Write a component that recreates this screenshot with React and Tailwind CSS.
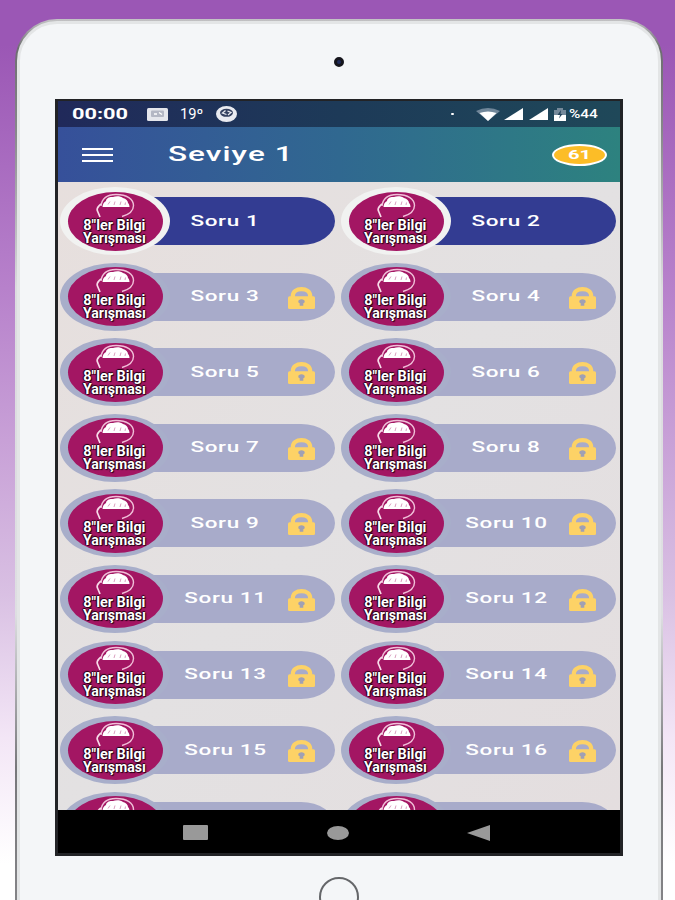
import React from 'react';

const questions = Array.from({ length: 18 }, (_, i) => ({
  id: i + 1,
  locked: i > 1,
}));

const BrainIcon = () => (
  <svg className="shrink-0" width="40" height="26" viewBox="0 0 40 26" fill="none">
    <path d="M6 13C7 5 13 1.500 21 1.500C32 1.500 38.500 6 38.500 12.500C38.500 18 34 21.500 27 23.500" stroke="#f0bfd8" strokeWidth="1.400" />
    <path d="M6 11C3.500 13 1.500 16 2.500 18L5 24" stroke="#f7dbe9" strokeWidth="1.700" />
    <path d="M7.500 14C7.500 11 9 9 11 8C11 5 15 3.500 18 4C21 2.500 26 3 28 5C31 5.500 33 8 33 10C34 11 34.500 12.500 34.500 14Z" fill="#fff" />
    <path d="M13 11.500L15 8.500M19 12L20 8.500M25 12L26 8.500M30 12L30.500 9.500" stroke="#cf86ae" strokeWidth="0.800" />
  </svg>
);

const LockIcon = () => (
  <svg width="27" height="22" viewBox="0 0 27 22" fill="none">
    <path d="M4.800 11V9C4.800 4.500 8.500 2.200 13.500 2.200S22.200 4.500 22.200 9V11" stroke="#fdd266" strokeWidth="4.200" />
    <rect y="9.300" width="27" height="12.700" rx="1.500" fill="#fdd266" />
    <path d="M13.500 12.200c-2 0-3.200 1-3.200 2.200 0 .9.500 1.500 1.400 1.900V18.800h3.600V16.300c.9-.4 1.400-1 1.400-1.900 0-1.200-1.200-2.200-3.200-2.200Z" fill="#a0a0b4" />
  </svg>
);

const Badge = ({ locked }) => (
  <div
    className={`relative z-10 flex h-[68px] w-[110px] shrink-0 items-center justify-center rounded-[50%] ${
      locked ? 'bg-[#a8aeca]' : 'bg-[#f1f2f1]'
    }`}
  >
    <div className="flex h-[59px] w-[95px] flex-col items-center rounded-[50%] bg-[#a31663] pt-px">
      <BrainIcon />
      <div className="-ml-[2px] flex flex-col items-center font-['Roboto',sans-serif] text-[15px] leading-[13px] font-bold whitespace-nowrap text-white [text-shadow:1px_1px_1px_#200010,-1px_0_1px_#200010,0_-1px_1px_#200010]">
        <span className="scale-x-[0.96]">8&quot;ler Bilgi</span>
        <span className="scale-x-[0.94]">Yarışması</span>
      </div>
    </div>
  </div>
);

const Question = ({ id, locked }) => (
  <div className="flex h-[68px] items-center">
    <Badge locked={locked} />
    <div
      className={`-ml-[55px] grid h-[48px] w-[220px] grid-cols-[1fr_auto_1fr] items-center rounded-r-[34px_24px] ${
        locked ? 'bg-[#a8abca]' : 'bg-[#333c92]'
      }`}
    >
      <span />
      <span className="scale-x-[1.5] font-['Roboto',sans-serif] text-[15px] leading-none font-medium tracking-[0.4px] text-white">
        Soru {id}
      </span>
      <span className="mt-[2px] mr-[20px] justify-self-end">{locked && <LockIcon />}</span>
    </div>
  </div>
);

const StatusBar = () => (
  <div className="flex h-[26px] shrink-0 items-center bg-linear-to-r from-[#20295a] via-[#1d3a58] to-[#1f4859] pl-[14px] text-white">
    <span className="w-[56px] font-['Roboto',sans-serif] text-[15px] leading-none font-bold">
      <span className="inline-block origin-left scale-x-[1.45]">00:00</span>
    </span>
    <svg className="ml-[19px]" width="21" height="13" viewBox="0 0 21 13">
      <rect width="21" height="13" rx="1.500" fill="#e4e6ec" />
      <rect x="4" y="2.500" width="13" height="6.500" rx="1" fill="#b3b7c4" />
      <path d="M7 6h3M12 4.500l3 2" stroke="#fff" strokeWidth="1.400" />
    </svg>
    <span className="ml-[12px] w-[23px] font-['Roboto',sans-serif] text-[14px] leading-none">
      <span className="inline-block origin-left scale-x-[1.05]">19º</span>
    </span>
    <svg className="ml-[13px]" width="21" height="16" viewBox="0 0 21 16">
      <ellipse cx="10.500" cy="8" rx="10.500" ry="8" fill="#e9ebf1" />
      <ellipse cx="10.500" cy="6.800" rx="6.500" ry="4" fill="#33405f" />
      <path d="M9.500 4.500L6.500 7l4 1.500M11.500 5l3.500 1.500-3 2.500" stroke="#e9ebf1" strokeWidth="1.300" fill="none" />
    </svg>
    <span className="ml-auto h-[2px] w-[3px] rounded-full bg-white" />
    <svg className="ml-[22px]" width="24" height="13" viewBox="0 0 24 13">
      <path d="M0 3Q12-3 24 3L12 13Z" fill="#71879a" />
      <path d="M3.500 5Q12 2 20.500 5L12 13Z" fill="#fff" />
    </svg>
    <svg className="ml-[4px]" width="19" height="12" viewBox="0 0 19 12">
      <path d="M0 12L19 0V12Z" fill="#fff" />
    </svg>
    <svg className="ml-[6px]" width="19" height="12" viewBox="0 0 19 12">
      <path d="M0 12L19 0V12Z" fill="#fff" />
    </svg>
    <svg className="ml-[6px]" width="12" height="13" viewBox="0 0 12 13">
      <path d="M0 2h3V0h6v2h3v5H0Z" fill="#75899a" />
      <path d="M0 7h12v6H0Z" fill="#fff" />
      <path d="M7 2L3.500 7H6L5 10.500 8.500 6H6.500Z" fill="#24445c" />
    </svg>
    <span className="mr-[21px] ml-[3px] w-[30px] font-['Roboto',sans-serif] text-[12px] leading-none font-medium">
      <span className="inline-block origin-left scale-x-[1.28]">%44</span>
    </span>
  </div>
);

const Header = () => (
  <div className="flex h-[55px] shrink-0 items-center bg-linear-to-r from-[#36509a] via-[#306890] to-[#2d827f] pl-[24px]">
    <div className="flex w-[31px] flex-col gap-[4px]">
      <span className="h-[2px] bg-white" />
      <span className="h-[2px] bg-white" />
      <span className="h-[2px] bg-white" />
    </div>
    <h1 className="ml-[55px] font-['Roboto',sans-serif] text-[21px] leading-none font-medium text-white">
      <span className="inline-block origin-left scale-x-[1.5] tracking-[0.7px]">Seviye 1</span>
    </h1>
    <div className="mr-[13px] ml-auto flex h-[22px] w-[55px] items-center justify-center rounded-[50%] border-2 border-white bg-[#fcbd27]">
      <span className="scale-x-[1.55] font-['Roboto',sans-serif] text-[13px] leading-none font-bold text-white">61</span>
    </div>
  </div>
);

const NavBar = () => (
  <div className="flex h-[43px] shrink-0 items-center bg-black pt-[2px] pl-[125px]">
    <span className="h-[15px] w-[25px] rounded-[1px] bg-[#999]" />
    <span className="ml-[119px] h-[14px] w-[22px] rounded-[50%] bg-[#999]" />
    <svg className="ml-[118px]" width="23" height="16" viewBox="0 0 23 16">
      <path d="M0 8L23 0V16Z" fill="#999" />
    </svg>
  </div>
);

const App = () => (
  <div className="h-[900px] w-[675px] overflow-hidden bg-[linear-gradient(#9b57b5_5%,#b781cb_32%,#d9c0e3_66%,#f3e6f6_82%,#fff_96%)] pt-[19px] pl-[15px]">
    <div className="h-[960px] w-[648px] rounded-[42px] bg-[linear-gradient(#c4c4c6_0,#6d6d70_3%,#88888b_12%,#dcdcdf_28%,#dedfe2_62%,#77777a_78%,#8b8b8e_100%)] p-[2px]">
      <div className="flex h-full flex-col items-center rounded-[40px] border-3 border-[#e3e5e6] bg-[#f4f6f8]">
        <div className="mt-[33px] h-[10px] w-[10px] rounded-full border-[3px] border-[#15151c] bg-[#202b5b]" />
        <div className="mt-[32px] flex h-[757px] w-[568px] shrink-0 flex-col border-[3px] border-t-2 border-[#222326] bg-black">
          <StatusBar />
          <Header />
          <div className="h-[628px] shrink-0 overflow-hidden bg-linear-to-br from-[#e7dfdd] via-[#e3e1e2] to-[#e4dedf] pt-[5px] pl-[2px]">
            <div className="grid grid-cols-[275px_275px] gap-x-[6px] gap-y-[7.600px]">
              {questions.map((q) => (
                <Question key={q.id} id={q.id} locked={q.locked} />
              ))}
            </div>
          </div>
          <NavBar />
        </div>
        <div className="mt-[21px] mr-px h-[40px] w-[40px] shrink-0 rounded-full border-2 border-[#65676a]" />
      </div>
    </div>
  </div>
);

export default App;
